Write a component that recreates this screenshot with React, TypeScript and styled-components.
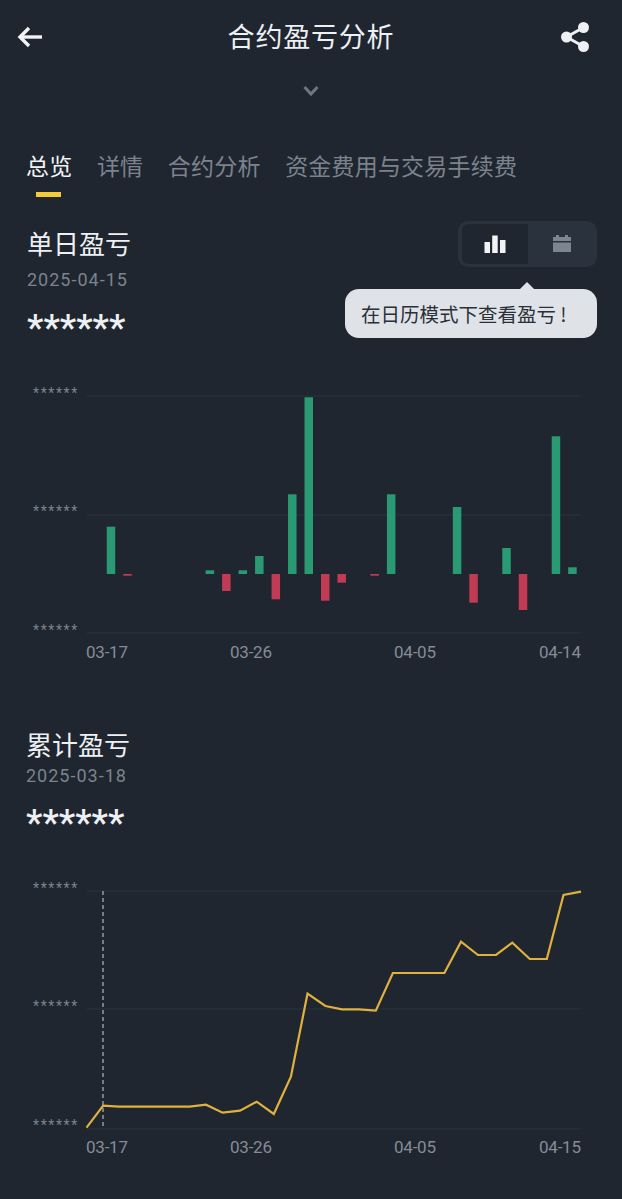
import * as React from 'react';
import styled, { createGlobalStyle } from 'styled-components';

const GlobalStyle = createGlobalStyle`
  html, body {
    background: #1f2630;
    margin: 0;
    padding: 0;
  }
`;

const cjk = `"Noto Sans CJK SC", "Noto Sans", sans-serif`;
const digits = `Roboto, "Liberation Sans", sans-serif`;

const Page = styled.div`
  background: #1f2630;
  color: #eef0f3;
  font-family: ${cjk};
  height: 1199px;
  overflow: hidden;
  width: 622px;
`;

const Header = styled.header`
  align-items: center;
  display: grid;
  grid-template-columns: 1fr auto 1fr;
  height: 70px;
  padding: 0 17px;
`;

const Title = styled.h1`
  font-size: 27px;
  font-weight: 400;
  letter-spacing: 0.8px;
  margin: 0;
`;

const IconButton = styled.button<{ $end?: boolean }>`
  all: unset;
  display: flex;
  justify-content: ${({ $end }) => ($end ? 'flex-end' : 'flex-start')};
  margin-right: ${({ $end }) => ($end ? '15px' : '0')};
  margin-top: 3px;
`;

const Expand = styled.div`
  box-sizing: border-box;
  display: flex;
  height: 34px;
  justify-content: center;
  padding-top: 15px;
`;

const Tabs = styled.nav`
  display: flex;
  gap: 24.5px;
  margin-top: 42px;
  padding-left: 26px;
`;

const Tab = styled.div<{ $active?: boolean }>`
  color: ${({ $active }) => ($active ? '#f2f3f5' : '#7c838d')};
  font-size: 23px;
  height: 51px;
  letter-spacing: 0.2px;
  line-height: 38px;
  position: relative;

  &::after {
    background: #f5cc36;
    bottom: 0;
    content: '';
    display: ${({ $active }) => ($active ? 'block' : 'none')};
    height: 5px;
    left: 10px;
    position: absolute;
    width: 25px;
  }
`;

const Section = styled.section<{ $top: number; $left: number }>`
  margin-top: ${({ $top }) => $top}px;
  padding-left: ${({ $left }) => $left}px;
  position: relative;
`;

const SectionHead = styled.div`
  align-items: flex-start;
  display: flex;
  justify-content: space-between;
  padding-right: 25px;
`;

const SummaryBlock = styled.div`
  padding-top: 4px;
`;

const SectionTitle = styled.h2`
  font-size: 26px;
  font-weight: 400;
  line-height: 36px;
  margin: 0;
`;

const DateLine = styled.div<{ $gap: number }>`
  color: #7c838d;
  font-family: ${digits};
  font-size: 18px;
  font-weight: 400;
  letter-spacing: 1px;
  line-height: 28px;
  margin-top: ${({ $gap }) => $gap}px;
`;

const Masked = styled.div<{ $gap: number }>`
  font-family: ${digits};
  font-size: 37px;
  font-weight: 500;
  height: 44px;
  line-height: 56px;
  margin-top: ${({ $gap }) => $gap}px;
`;

const Toggle = styled.div`
  background: #2a323d;
  border-radius: 10px;
  box-sizing: border-box;
  display: flex;
  height: 46px;
  padding: 3px 2px 3px 4px;
  width: 139px;
`;

const ToggleItem = styled.div<{ $active?: boolean }>`
  align-items: center;
  background: ${({ $active }) => ($active ? '#1f2630' : 'transparent')};
  border-radius: 6px 0 0 6px;
  display: flex;
  flex: ${({ $active }) => ($active ? '0 0 66px' : '1')};
  justify-content: center;
`;

const Tooltip = styled.div`
  background: #dfe3e8;
  border-radius: 14px;
  color: #2b3038;
  font-size: 19.5px;
  height: 49px;
  left: 345px;
  line-height: 49px;
  padding-left: 16px;
  position: absolute;
  top: 68px;
  width: 236px;

  &::before {
    border-bottom: 7px solid #dfe3e8;
    border-left: 7px solid transparent;
    border-right: 7px solid transparent;
    content: '';
    left: 175px;
    position: absolute;
    top: -7px;
  }
`;

const ChartSvg = styled.svg`
  display: block;

  text {
    font-family: ${digits};
  }

  .axis {
    fill: #858c96;
    font-size: 17px;
  }

  .stars {
    fill: #7c838d;
    font-size: 14px;
  }
`;

const grid = '#2b333e';

type Bar = { i: number; edge: number };

// edge is the far end of the bar in chart coords, baseline at 194
const bars: Bar[] = [
  { i: 0, edge: 146.7 },
  { i: 1, edge: 195.7 },
  { i: 6, edge: 190.3 },
  { i: 7, edge: 211 },
  { i: 8, edge: 190.3 },
  { i: 9, edge: 176 },
  { i: 10, edge: 219.3 },
  { i: 11, edge: 114.3 },
  { i: 12, edge: 17.3 },
  { i: 13, edge: 220.7 },
  { i: 14, edge: 202.7 },
  { i: 16, edge: 195.7 },
  { i: 17, edge: 114.3 },
  { i: 21, edge: 127 },
  { i: 22, edge: 222.7 },
  { i: 24, edge: 168 },
  { i: 25, edge: 230 },
  { i: 27, edge: 56.3 },
  { i: 28, edge: 187.3 },
];

const linePoints = [
  [86.5, 1127.7], [103.2, 1105.7], [119, 1106.7], [189.7, 1106.7], [206, 1104.7],
  [222.6, 1112.7], [240, 1110.7], [256.7, 1101.7], [273.8, 1114], [290.9, 1076.7],
  [307.5, 993.7], [325.4, 1006], [342, 1009.3], [359, 1009.3], [375.8, 1010.7],
  [392.9, 973], [444.4, 973], [461, 941.7], [478, 955], [496, 955],
  [512.3, 942.7], [529.8, 959], [546.8, 959], [563.5, 895], [581, 891.7],
];

const BackIcon = () => (
  <svg width="26" height="22" viewBox="0 0 26 22" fill="none" stroke="#f2f3f5" strokeWidth="3.4">
    <path d="M25 11H4" />
    <path d="M12 2 3 11l9 9" />
  </svg>
);

const ShareIcon = () => (
  <svg width="30" height="32" viewBox="0 0 30 32" fill="#eef0f3">
    <circle cx="23.5" cy="6.5" r="5.5" />
    <circle cx="6.5" cy="16" r="5.5" />
    <circle cx="23.5" cy="25.5" r="5.5" />
    <path d="M6.5 16 23.5 6.5M6.5 16l17 9.5" stroke="#eef0f3" strokeWidth="3" />
  </svg>
);

const ChevronIcon = () => (
  <svg width="16" height="12" viewBox="0 0 16 12" fill="none" stroke="#6f7681" strokeWidth="3">
    <path d="m1.5 2 6.5 7 6.5-7" />
  </svg>
);

const BarsIcon = () => (
  <svg width="22" height="18" viewBox="0 0 22 18" fill="#f2f3f5">
    <rect x="0.5" y="7" width="5.5" height="11" />
    <rect x="8.2" y="0.5" width="5.5" height="17.5" />
    <rect x="16" y="5" width="5.5" height="13" />
  </svg>
);

const CalendarIcon = () => (
  <svg width="18" height="18" viewBox="0 0 18 18" fill="#7d8590">
    <rect x="3" y="0" width="3" height="3" />
    <rect x="12" y="0" width="3" height="3" />
    <path d="M0 2h18v4H0zM0 7.500h18V17H0z" />
  </svg>
);

const Stars = ({ y }: { y: number }) => (
  <text className="stars" x="33" y={y} letterSpacing="1.6">
    ******
  </text>
);

const XLabels = ({ labels }: { labels: string[] }) => {
  const xs = [86, 230, 394, 539];
  return (
    <>
      {labels.map((label, n) => (
        <text className="axis" key={label} x={xs[n]} y={278} textLength="42">
          {label}
        </text>
      ))}
    </>
  );
};

const BarChart = () => (
  <ChartSvg width="622" height="300" viewBox="0 0 622 300">
    {[16, 135, 253].map((y) => (
      <line key={y} x1="87" x2="581" y1={y} y2={y} stroke={grid} />
    ))}
    <Stars y={18} />
    <Stars y={136} />
    <Stars y={255} />
    {bars.map(({ i, edge }) => {
      const base = 194;
      const x = 111 + 16.48 * i - 4.25;
      const up = edge < base;
      return (
        <rect
          key={i}
          x={x}
          y={up ? edge : base}
          width="8.500"
          height={Math.abs(edge - base)}
          fill={up ? '#2a9a72' : '#c23b54'}
        />
      );
    })}
    <XLabels labels={['03-17', '03-26', '04-05', '04-14']} />
  </ChartSvg>
);

const LineChart = () => {
  const top = 875;
  const points = linePoints.map(([x, y]) => `${x},${y - top}`).join(' ');
  return (
    <ChartSvg width="622" height="300" viewBox="0 0 622 300">
      {[16, 134, 254].map((y) => (
        <line key={y} x1="87" x2="581" y1={y} y2={y} stroke={grid} />
      ))}
      <Stars y={18} />
      <Stars y={136} />
      <Stars y={255} />
      <line x1="103" x2="103" y1="16" y2="254" stroke="#d0d4da" strokeDasharray="4 3" />
      <polyline points={points} fill="none" stroke="#e0b13e" strokeWidth="2.2" />
      <XLabels labels={['03-17', '03-26', '04-05', '04-15']} />
    </ChartSvg>
  );
};

const App = () => (
  <Page>
    <GlobalStyle />
    <Header>
      <IconButton aria-label="back">
        <BackIcon />
      </IconButton>
      <Title>合约盈亏分析</Title>
      <IconButton aria-label="share" $end>
        <ShareIcon />
      </IconButton>
    </Header>
    <Expand>
      <ChevronIcon />
    </Expand>
    <Tabs>
      <Tab $active>总览</Tab>
      <Tab>详情</Tab>
      <Tab>合约分析</Tab>
      <Tab>资金费用与交易手续费</Tab>
    </Tabs>
    <Section $top={24} $left={27}>
      <SectionHead>
        <SummaryBlock>
          <SectionTitle>单日盈亏</SectionTitle>
          <DateLine $gap={5}>2025-04-15</DateLine>
          <Masked $gap={6}>******</Masked>
        </SummaryBlock>
        <Toggle>
          <ToggleItem $active>
            <BarsIcon />
          </ToggleItem>
          <ToggleItem>
            <CalendarIcon />
          </ToggleItem>
        </Toggle>
      </SectionHead>
      <Tooltip>在日历模式下查看盈亏 !</Tooltip>
    </Section>
    <Section $top={36} $left={0}>
      <BarChart />
    </Section>
    <Section $top={46} $left={26}>
      <SectionTitle>累计盈亏</SectionTitle>
      <DateLine $gap={0}>2025-03-18</DateLine>
      <Masked $gap={5}>******</Masked>
    </Section>
    <Section $top={36} $left={0}>
      <LineChart />
    </Section>
  </Page>
);

export default App;
